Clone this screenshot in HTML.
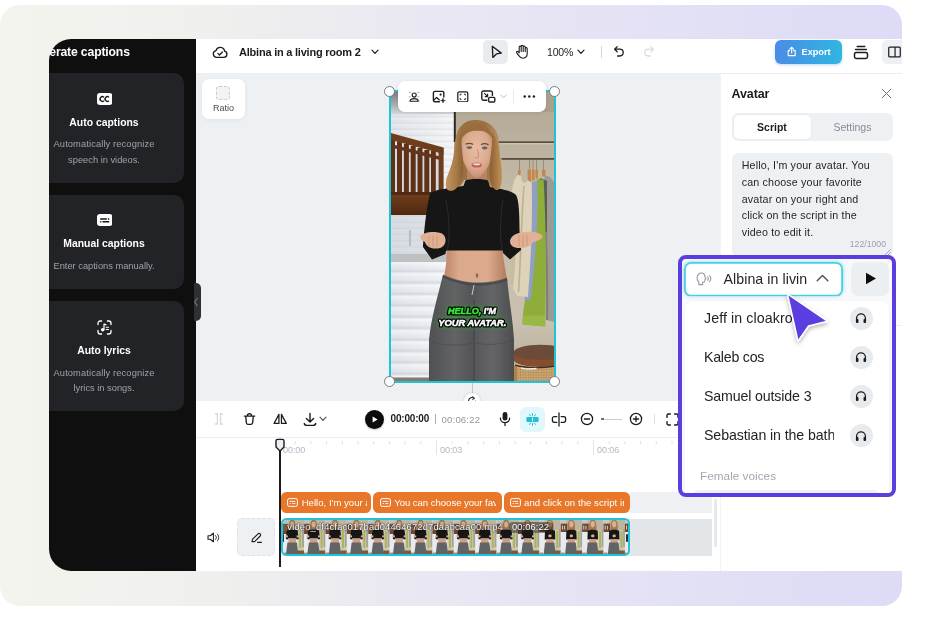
<!DOCTYPE html>
<html>
<head>
<meta charset="utf-8">
<style>
*{box-sizing:border-box;margin:0;padding:0}
html,body{width:952px;height:625px;overflow:hidden;background:#fff;font-family:"Liberation Sans",sans-serif;}
.abs{position:absolute}
#card{position:absolute;left:0;top:5px;width:902px;height:600.5px;border-radius:20px;background:linear-gradient(90deg,#f4f4ee 0%,#efefed 24%,#eae9f2 44%,#e4e2f4 70%,#dddbf6 100%);overflow:hidden}
#app{position:absolute;left:49px;top:34px;width:853px;height:532px;border-radius:22px 0 0 22px;overflow:hidden;background:#fff}
/* everything inside #app is positioned in page coords via wrapper offset */
#pg{will-change:transform;position:absolute;left:-49px;top:-39px;width:952px;height:625px}
#side{left:49px;top:39px;width:147px;height:532px;background:#0f0f10}
.scard{left:49px;width:135px;background:#222326;border-radius:0 10px 10px 0}
.st{color:#fff;font-weight:bold;font-size:10.4px;text-align:center;width:160px;left:24px;white-space:nowrap}
.sd{color:#9fa2a8;font-size:9.3px;text-align:center;width:160px;left:24px;white-space:nowrap}
#top{left:196px;top:39px;width:706px;height:34px;background:#fff}
#canvas{left:196px;top:73px;width:524px;height:328px;background:#eef1f4}
#tbar{left:196px;top:401px;width:524px;height:37px;background:#fff;border-bottom:1px solid #eceef0}
#tl{left:196px;top:438px;width:524px;height:133px;background:#fff}
#rp{left:720px;top:73px;width:182px;height:498px;background:#fff;border-left:1px solid #f1f3f5}
.it{left:704px;font-size:14.2px;color:#232427;white-space:nowrap;letter-spacing:0.05px}
.hp{left:849.8px;width:23px;height:23px;border-radius:12px;background:#e8ebee}
.hd{width:11px;height:11px;border-radius:6px;background:#fff;border:1px solid #767a82}
.tm{top:445.3px;font-size:9.1px;color:#b2b8c3;white-space:nowrap;letter-spacing:-0.1px}
.cc{top:491.7px;height:21.2px;border-radius:5.5px;background:#e8772a;color:#fff;font-size:9.6px;line-height:21px;white-space:nowrap}
.cc span{position:absolute;left:21px;top:0;overflow:hidden;display:block;height:21px}
.ci{top:497.8px}
</style>
</head>
<body>
<div id="card">
<div id="app"><div id="pg">

<div id="side" class="abs"></div>
<div id="top" class="abs"></div>
<div id="canvas" class="abs"></div>
<div id="tbar" class="abs"></div>
<div id="tl" class="abs"></div>
<div id="rp" class="abs"></div>


<div class="abs" style="left:26px;top:44.6px;width:200px;color:#fff;font-weight:bold;font-size:12.2px;white-space:nowrap;letter-spacing:-0.15px">Generate captions</div>
<div class="abs" style="left:40px;top:39px;width:9px;height:30px;background:#0f0f10"></div>
<div class="abs scard" style="top:73px;height:110px"></div>
<div class="abs scard" style="top:195px;height:94px"></div>
<div class="abs scard" style="top:301px;height:110px"></div>
<!-- cc icon -->
<svg class="abs" style="left:96.500px;top:92.900px" width="15.400" height="12" viewBox="0 0 15.400 12"><rect x="0" y="0" width="15.400" height="12" rx="3" fill="#fff"/><path d="M6.900 4.300A2.300 2.300 0 1 0 6.900 7.700M11.900 4.300A2.300 2.300 0 1 0 11.900 7.700" fill="none" stroke="#18191b" stroke-width="1.400"/></svg>
<div class="abs st" style="top:116.5px">Auto captions</div>
<div class="abs sd" style="top:139.3px;letter-spacing:0.12px">Automatically recognize</div>
<div class="abs sd" style="top:154.5px">speech in videos.</div>
<!-- manual icon -->
<svg class="abs" style="left:96.500px;top:214.400px" width="15.400" height="12" viewBox="0 0 15.400 12"><rect x="0" y="0" width="15.400" height="12" rx="3" fill="#fff"/><path d="M3.200 4.900H9.800M10.900 4.900H12.200M3.200 7.800H4.400M5.500 7.800H12.200" fill="none" stroke="#18191b" stroke-width="1.500"/></svg>
<div class="abs st" style="top:238px">Manual captions</div>
<div class="abs sd" style="top:260.5px">Enter captions manually.</div>
<!-- lyrics icon -->
<svg class="abs" style="left:96.800px;top:319.700px" width="15" height="15" viewBox="0 0 15 15"><path d="M1 4.600V3.200A2.200 2.200 0 0 1 3.200 1H4.600M10.400 1H11.800A2.200 2.200 0 0 1 14 3.200V4.600M14 10.400V11.800A2.200 2.200 0 0 1 11.800 14H10.400M4.600 14H3.200A2.200 2.200 0 0 1 1 11.800V10.400" fill="none" stroke="#fff" stroke-width="1.300" stroke-linecap="round"/><circle cx="5.700" cy="9.700" r="1.800" fill="#fff"/><path d="M7 9.700V4.200L9.400 4.900" fill="none" stroke="#fff" stroke-width="1.200" stroke-linejoin="round"/><path d="M9.200 7.300H11.500M9.200 9.500H11.500" stroke="#fff" stroke-width="1.100" stroke-linecap="round"/></svg>
<div class="abs st" style="top:344.5px">Auto lyrics</div>
<div class="abs sd" style="top:367.6px;letter-spacing:0.12px">Automatically recognize</div>
<div class="abs sd" style="top:382.5px">lyrics in songs.</div>
<!-- collapse tab -->
<div class="abs" style="left:194px;top:283px;width:6.9px;height:38px;background:#2f3033;border-radius:0 5px 5px 0"></div>
<svg class="abs" style="left:193.300px;top:297.200px" width="6" height="10" viewBox="0 0 6 10"><path d="M4.400 1.200L1.600 5L4.400 8.800" fill="none" stroke="#74777c" stroke-width="1.100"/></svg>


<!-- cloud icon -->
<svg class="abs" style="left:212px;top:44.5px" width="16" height="14" viewBox="0 0 16 14"><path d="M4.3 12.3H11.9A3.1 3.1 0 0 0 12.6 6.2A4.4 4.4 0 0 0 4 5.6A3.4 3.4 0 0 0 4.3 12.3Z" fill="none" stroke="#1b1c1f" stroke-width="1.3" stroke-linejoin="round"/><path d="M5.9 8.4L7.5 10L10.4 7" fill="none" stroke="#1b1c1f" stroke-width="1.3" stroke-linecap="round" stroke-linejoin="round"/></svg>
<div class="abs" style="left:239px;top:45.5px;font-size:11px;font-weight:bold;color:#1b1c1f;white-space:nowrap;letter-spacing:-0.22px">Albina in a living room 2</div>
<svg class="abs" style="left:371px;top:49px" width="8" height="6" viewBox="0 0 8 6"><path d="M1 1.2L4 4.3L7 1.2" fill="none" stroke="#1b1c1f" stroke-width="1.2" stroke-linecap="round" stroke-linejoin="round"/></svg>
<!-- select tool -->
<div class="abs" style="left:483px;top:40px;width:25px;height:24px;border-radius:5px;background:#e9ecef"></div>
<svg class="abs" style="left:490px;top:45px" width="13" height="14" viewBox="0 0 13 14"><path d="M2.3 1.3L11.3 8.1L6.4 8.9L2.9 12.4Z" fill="none" stroke="#1b1c1f" stroke-width="1.35" stroke-linejoin="round"/></svg>
<!-- hand -->
<svg class="abs" style="left:515px;top:44px" width="14" height="16" viewBox="0 0 14 16"><path d="M4.2 8.2V3.1A1 1 0 0 1 6.2 3.1V2.2A1 1 0 0 1 8.2 2.2V3A1 1 0 0 1 10.2 3V4.6A1 1 0 0 1 12.2 4.6V9.6C12.2 12.6 10.4 14.2 8 14.2C5.6 14.2 4.8 13.2 3.6 11.4L1.6 8.6C1.1 7.6 2.4 6.8 3.2 7.6L4.2 8.8M6.2 3.1V7.4M8.2 3V7.4M10.2 4.6V7.6" fill="none" stroke="#1b1c1f" stroke-width="1.1" stroke-linecap="round" stroke-linejoin="round"/></svg>
<div class="abs" style="left:547px;top:46px;font-size:10.5px;color:#1b1c1f;white-space:nowrap;letter-spacing:-0.2px">100%</div>
<svg class="abs" style="left:577px;top:49px" width="8" height="6" viewBox="0 0 8 6"><path d="M1 1.2L4 4.3L7 1.2" fill="none" stroke="#1b1c1f" stroke-width="1.2" stroke-linecap="round" stroke-linejoin="round"/></svg>
<div class="abs" style="left:601px;top:46px;width:1px;height:12px;background:#d4d7db"></div>
<!-- undo -->
<svg class="abs" style="left:613px;top:45px" width="12" height="13" viewBox="0 0 12 13"><path d="M4.2 1.6L1.6 4.2L4.2 6.8M1.8 4.2H6.8A3.4 3.4 0 0 1 6.8 11H4.6" fill="none" stroke="#1b1c1f" stroke-width="1.3" stroke-linecap="round" stroke-linejoin="round"/></svg>
<svg class="abs" style="left:643px;top:45px" width="12" height="13" viewBox="0 0 12 13"><path d="M7.8 1.6L10.4 4.2L7.8 6.8M10.2 4.2H5.2A3.4 3.4 0 0 0 5.2 11H7.4" fill="none" stroke="#d9dce0" stroke-width="1.3" stroke-linecap="round" stroke-linejoin="round"/></svg>
<!-- export -->
<div class="abs" style="left:775px;top:40px;width:67px;height:24px;border-radius:6px;background:linear-gradient(90deg,#4a8ce6,#2fb6e2);box-shadow:0 1px 3px rgba(60,140,230,.35)"></div>
<svg class="abs" style="left:787.3px;top:46px" width="10" height="11" viewBox="0 0 10 11"><path d="M2.700 4.600H1.200V9.600H8.200V4.600H6.700M4.700 7V1.300M2.800 3.100L4.700 1.200L6.600 3.100" fill="none" stroke="#fff" stroke-width="1.100" stroke-linejoin="round" stroke-linecap="round"/></svg>
<div class="abs" style="left:801.5px;top:46.5px;font-size:9.2px;font-weight:bold;color:#fff;white-space:nowrap">Export</div>
<!-- stack -->
<svg class="abs" style="left:853px;top:45px" width="16" height="15" viewBox="0 0 16 15"><path d="M4.2 1.4H11.8M2.6 4.6H13.4" fill="none" stroke="#1b1c1f" stroke-width="1.5" stroke-linecap="round"/><rect x="1.5" y="7.6" width="13" height="5.8" rx="1.6" fill="none" stroke="#1b1c1f" stroke-width="1.5"/></svg>
<div class="abs" style="left:882px;top:40px;width:26px;height:24px;border-radius:5px;background:#eef0f3"></div>
<svg class="abs" style="left:888.2px;top:46px" width="13" height="12" viewBox="0 0 14 12"><rect x="0.8" y="0.8" width="12.4" height="10.4" rx="1" fill="none" stroke="#1b1c1f" stroke-width="1.3"/><path d="M7.6 0.8V11.2" stroke="#1b1c1f" stroke-width="1.3"/></svg>


<!-- ratio button -->
<div class="abs" style="left:202px;top:79px;width:43px;height:40px;border-radius:7px;background:#fff;box-shadow:0 1px 5px rgba(0,0,0,.06)"></div>
<div class="abs" style="left:216px;top:86px;width:14px;height:14px;border-radius:3px;border:1.2px dashed #c9cdd2;background:#f1f3f5"></div>
<div class="abs" style="left:202px;top:103px;width:43px;text-align:center;font-size:9px;color:#4a4d54">Ratio</div>
<!-- photo -->
<svg class="abs" style="left:389px;top:90px" width="166" height="292" viewBox="389 90 166 292" preserveAspectRatio="none">
<!--PHOTO_S--><defs>
<linearGradient id="gBl" x1="0" x2="1" y1="0" y2="0"><stop offset="0" stop-color="#dde1e7"/><stop offset="0.6" stop-color="#e9ebef"/><stop offset="1" stop-color="#f3f4f6"/></linearGradient>
<linearGradient id="gTop" x1="0" x2="0" y1="0" y2="1"><stop offset="0" stop-color="#77787a"/><stop offset="0.6" stop-color="#a9abae"/><stop offset="1" stop-color="#d5d7db"/></linearGradient>
<linearGradient id="gWall" x1="0" x2="0" y1="0" y2="1"><stop offset="0" stop-color="#b1a793"/><stop offset="0.35" stop-color="#c3baa8"/><stop offset="0.8" stop-color="#c9c0af"/><stop offset="1" stop-color="#b3a996"/></linearGradient>
<linearGradient id="gSl" x1="0" x2="0" y1="0" y2="1"><stop offset="0" stop-color="#fff" stop-opacity=".55"/><stop offset="0.4" stop-color="#fff" stop-opacity=".1"/><stop offset="0.82" stop-color="#b9bec8" stop-opacity=".42"/><stop offset="1" stop-color="#fff" stop-opacity=".4"/></linearGradient><pattern id="pBl" x="0" y="262" width="10" height="11.4" patternUnits="userSpaceOnUse"><rect width="10" height="11.4" fill="url(#gSl)"/></pattern><pattern id="pBl2" x="0" y="112" width="10" height="6.2" patternUnits="userSpaceOnUse"><rect width="10" height="6.2" fill="url(#gSl)" opacity=".6"/></pattern>
<linearGradient id="gPant" x1="0" x2="1" y1="0" y2="0"><stop offset="0" stop-color="#4f5052"/><stop offset="0.3" stop-color="#626365"/><stop offset="0.5" stop-color="#545557"/><stop offset="0.75" stop-color="#646567"/><stop offset="1" stop-color="#4c4d4f"/></linearGradient>
<linearGradient id="gSkin" x1="0" x2="1" y1="0" y2="0"><stop offset="0" stop-color="#b98363"/><stop offset="0.25" stop-color="#dba98b"/><stop offset="0.7" stop-color="#dcab8e"/><stop offset="1" stop-color="#b27a5b"/></linearGradient>
<linearGradient id="gHair" x1="0" x2="1" y1="0" y2="0"><stop offset="0" stop-color="#bf935d"/><stop offset="0.3" stop-color="#99703f"/><stop offset="0.7" stop-color="#9d7242"/><stop offset="1" stop-color="#c0945f"/></linearGradient>
<linearGradient id="gBed" x1="0" x2="0" y1="0" y2="1"><stop offset="0" stop-color="#73401f"/><stop offset="1" stop-color="#50280f"/></linearGradient>
<linearGradient id="gHL" x1="0" x2="1" y1="0" y2="0"><stop offset="0" stop-color="#c29660"/><stop offset="0.6" stop-color="#a87a48"/><stop offset="1" stop-color="#8a5e34"/></linearGradient><linearGradient id="gHR" x1="0" x2="1" y1="0" y2="0"><stop offset="0" stop-color="#8a5e34"/><stop offset="0.5" stop-color="#a67743"/><stop offset="1" stop-color="#bf925c"/></linearGradient>
<radialGradient id="gFace" cx="0.48" cy="0.45" r="0.62"><stop offset="0" stop-color="#e8bca1"/><stop offset="0.6" stop-color="#dcab8f"/><stop offset="1" stop-color="#bd8768"/></radialGradient>
<pattern id="pMesh" x="514" y="368.500" width="2.600" height="2.600" patternUnits="userSpaceOnUse"><rect x="0.700" y="0.700" width="1.300" height="1.300" fill="#9c7440" opacity=".75"/></pattern>
<filter id="b1"><feGaussianBlur stdDeviation="0.5"/></filter>
<filter id="b2"><feGaussianBlur stdDeviation="1.2"/></filter>
<filter id="gl" x="-20%" y="-50%" width="140%" height="200%"><feGaussianBlur stdDeviation="2"/></filter>
</defs><g filter="url(#b1)">
<!-- wall -->
<rect x="389" y="90" width="166" height="292" fill="url(#gWall)"/>
<!-- blinds -->
<rect x="389" y="90" width="65" height="292" fill="url(#gBl)"/>
<rect x="389" y="112" width="65" height="145" fill="url(#pBl2)"/><rect x="389" y="262" width="65" height="120" fill="url(#pBl)"/>
<rect x="389" y="90" width="65" height="24" fill="url(#gTop)"/>
<rect x="389" y="215" width="58" height="40" fill="#c9ced6" opacity=".45"/>
<rect x="389" y="254" width="58" height="8" fill="#bfc0c2" filter="url(#b1)"/>
<rect x="409" y="230" width="2" height="16" fill="#a9adb3" opacity=".7"/>
<!-- door frame -->
<rect x="453.8" y="108" width="2" height="34" fill="#2c2a28"/>
<rect x="455.8" y="90" width="100" height="22" fill="#aaa08c"/>
<!-- floor -->
<rect x="389" y="377.500" width="42" height="5" fill="#857a6d"/>
<!-- bed -->
<g>
<rect x="390" y="150" width="50" height="45" fill="#d5d8dc"/>
<g fill="#5e3216"><rect x="389" y="140" width="6" height="55"/><rect x="397" y="142" width="5" height="53"/><rect x="403.900" y="144" width="5" height="51"/><rect x="410.700" y="146" width="5" height="49"/><rect x="417.500" y="148" width="5" height="47"/><rect x="424.300" y="150" width="5" height="45"/><rect x="431" y="151" width="4.800" height="44"/></g>
<path d="M389 132.5L443.5 147.5V154L389 139.5Z" fill="#6e3d1e"/>
<path d="M389 143.5L440 156.5V160L389 147Z" fill="#64361a"/>
<rect x="438.6" y="148" width="5" height="60" fill="#6c3c1e"/>
<rect x="389" y="192" width="55" height="23" fill="url(#gBed)"/>
<rect x="389" y="192" width="55" height="3" fill="#512a12"/>
</g>
<!-- shelf rails -->
<rect x="497.5" y="141.3" width="58" height="1.7" fill="#5d4d41"/>
<rect x="497.5" y="143" width="58" height="1.4" fill="#d3cbbb" opacity=".7"/>
<rect x="501.5" y="158" width="54" height="1.8" fill="#5a4a3e"/>
<!-- hanger hooks -->
<g stroke="#8b7b69" stroke-width=".7" fill="none"><path d="M519.5 160V170"/><path d="M529.5 160V170"/><path d="M533 160V170"/><path d="M536.5 160V170"/><path d="M543.5 160V170"/></g>
<g fill="#c78649"><rect x="518" y="169.5" width="2.6" height="5.5" rx="1"/><rect x="527.6" y="169.5" width="3.6" height="12" rx="1"/><rect x="532" y="169.5" width="2.6" height="11" rx="1"/><rect x="535.4" y="169.5" width="2.6" height="9" rx="1"/><rect x="542" y="169.5" width="3.4" height="7" rx="1"/></g>
<!-- clothes -->
<path d="M545 176C548 175 552 178 555 184V322L546 320C546 280 544 230 541 190Z" fill="#9a9b95"/>
<path d="M541 182C545 200 548 260 547 320" stroke="#6c6d68" stroke-width="2" fill="none" opacity=".6"/>
<path d="M540 178L547 181V232L541.500 232Z" fill="#5a5f52"/><path d="M537 179L543.600 180C546 220 546.500 280 545.200 326.500L522.500 324.500C522.500 314 524 306 525.500 298C528.500 280 531 255 533 230Z" fill="#8fad3a"/>
<path d="M523.200 315.500H545.500L545.200 326.500L522.500 324.500Z" fill="#9ab844"/>
<path d="M532 182L537 181C538.500 210 536 258 530.500 300L524.500 300C529 262 532 220 532 182Z" fill="#8f9fc6"/>
<path d="M518 175C514 178 511.5 186 512 200C514 230 512 262 509 282L517.5 296L528 297C531 260 533 215 531.5 183L527.5 180C525 186 521 182 521 176Z" fill="#ddd2ba"/>
<path d="M524 186C521.5 215 521 255 518.5 292" stroke="#b7a98c" stroke-width="1.6" fill="none" opacity=".8"/>
<path d="M512 200C514 230 512 262 509 282L513 288C516 262 517 225 516 196Z" fill="#c9bc9f"/>
<!-- table / basket -->
<rect x="514" y="366" width="42" height="16" fill="#c9a572"/>
<rect x="514" y="368.500" width="42" height="14" fill="url(#pMesh)"/>
<rect x="513.500" y="352.300" width="43" height="7" fill="#864e2d"/><ellipse cx="540.500" cy="359.300" rx="27" ry="7.600" fill="#864e2d"/>
<ellipse cx="540.500" cy="352.300" rx="27" ry="7.600" fill="#6c4c3a"/>
<path d="M515 364.500C526 367.600 542 367.600 555 365.300V366.700C542 369 526 369 515 365.900Z" fill="#3d3128"/>
<path d="M521 367.400C526 368.500 532 368.500 536.500 367.800V369.200C532 369.900 526 369.900 521 368.800Z" fill="#f1efe9"/>
<rect x="514" y="366" width="3" height="16" fill="#a8763f" opacity=".7"/>
<!-- hair back -->
<path d="M476 120C468 119.5 460 124 457 133C454 142 455 152 452 163C450 171 446 178 446 185C446 190 450 191.5 455 190C459 188.5 462 184 464 180L488 180C489 184 491 188 495 189.5C499 190.5 501 186 501.5 180C502 172 501 164 500 156C499 146 499.5 138 496 131C492 124 485 120 476 120Z" fill="url(#gHair)"/>
<!-- neck -->
<path d="M467 168H487V184H467Z" fill="#b98465"/>
<!-- face -->
<path d="M476.500 126C468 126 461.500 133 461 144C460.500 153 463 162 467 168.500C470 173.500 473.500 177.600 476.800 177.600C480 177.600 484 173.500 487 168.500C491 162 493.300 153 493 144C492.500 133 485.500 126 476.500 126Z" fill="url(#gFace)"/>
<path d="M461 140C462 130 468 124 476 123.5C485 123 491 129 492.5 139C489 133 484 130 477 131C470 130 464 134 461 140Z" fill="#9a6c3e"/>
<ellipse cx="469.300" cy="147.600" rx="2.800" ry="1.400" fill="#55666f"/>
<ellipse cx="484.700" cy="148" rx="2.800" ry="1.400" fill="#55666f"/>
<path d="M465.5 144.2C468 143 471 143.2 473 144.4M481 144.6C483.5 143.4 486.5 143.6 488.5 145" stroke="#6e4a2c" stroke-width="1.300" fill="none"/>
<path d="M477.500 149C478 153 478.800 155.500 478.400 157.200C477.600 158.200 475.600 158.200 474.800 157.400" stroke="#b98365" stroke-width="1" fill="none" opacity=".8"/>
<ellipse cx="476.8" cy="165" rx="5.2" ry="2.6" fill="#c8615f"/>
<ellipse cx="476.8" cy="164.2" rx="3.6" ry="1" fill="#f0dcd6"/>
<!-- top -->
<path d="M465.5 180.5C470 178.5 483 178.5 488 180.5L490 187C500 189 511 190 516 195C519 200 519.5 215 519.5 230L521 250L510 259.5L503 253L502.5 251L446 251L445.5 254L432 259.5L423 247C424 230 427 205 430 194C434 189 452 188 463.5 186Z" fill="#121213"/>
<path d="M446 200C450 220 450 240 447 251M503 200C500 220 500 240 502.5 251" stroke="#26262a" stroke-width="1.5" fill="none"/>
<!-- hair front strands -->
<path d="M461.5 132C456 140 455.5 152 452.5 163C450 171 445.5 178 445.8 185C446 190.5 450 192 454 190C458.5 187.5 462 181 463 172C464 160 460.5 146 461.5 132Z" fill="url(#gHL)"/>
<path d="M492 132C497 139 499 148 500 157C501 165 502.3 173 501.6 181C501 188 498.5 191.5 495 189.5C491.5 187 489.5 180 489.5 171C489.500 159 493 146 492 132Z" fill="url(#gHR)"/>
<!-- midriff -->
<path d="M446.5 250.5H502.5C503 258 505 266 506.5 277L507 282H443L444.5 274C446 266 447 258 446.5 250.5Z" fill="url(#gSkin)"/>
<ellipse cx="477" cy="275.5" rx="1.3" ry="2.2" fill="#9b6444"/>
<!-- pants -->
<path d="M443 274.5C455 280 466 282.5 477 282.5C488 282.5 499 281 507 277.5C509 300 513 320 514 340V382H429V340C431 318 438 296 443 274.5Z" fill="url(#gPant)"/>
<path d="M443 276.5C455 282 466 284.5 477 284.5C488 284.5 499 283 507 279.5" stroke="#454648" stroke-width="2.4" fill="none" opacity=".8"/>
<path d="M474 300V382" stroke="#464749" stroke-width="1.6" opacity=".8"/>
<path d="M432 342C445 346 460 346 474 343M476 343C490 346 502 344 513 340" stroke="#4a4b4d" stroke-width="1" fill="none" opacity=".7"/>
<path d="M474 285L472 295" stroke="#d6d6d6" stroke-width=".9"/>
<!-- hands -->
<path d="M420.5 236C424 232 432 231.5 438 232.5C443 233 446 236 445.5 241C445 246 441 249 435 248.5C430 248.5 426 246 425 242C422 241 419.5 238.5 420.5 236Z" fill="#e2b195"/>
<path d="M429 236V246M433 235.5V247M437 236V246.5" stroke="#c18c6d" stroke-width=".8" opacity=".8"/>
<path d="M542.5 235.5C539 232 531 231 524 232C517 232.5 510.5 236 510 241C510 246 514 248.5 521 248C527 247.5 531 246 533 242C537 241.5 543.5 238.5 542.5 235.5Z" fill="#e2b195"/>
<path d="M519 235.5V246.5M523 235V247M527 235V246" stroke="#c18c6d" stroke-width=".8" opacity=".8"/>
<!-- caption -->
<g font-family="Liberation Sans, sans-serif" font-weight="bold" font-style="italic" font-size="9.300" text-anchor="middle">
<g fill="#19d219" stroke="#16c516" stroke-width="4" opacity=".4" filter="url(#gl)"><text x="472" y="313.800" textLength="48" lengthAdjust="spacingAndGlyphs">HELLO, I'M</text><text x="472.300" y="325.500" textLength="68" lengthAdjust="spacingAndGlyphs">YOUR AVATAR.</text></g>
<text x="472" y="313.800" fill="#000" stroke="#000" stroke-width="3" stroke-linejoin="round" textLength="48" lengthAdjust="spacingAndGlyphs">HELLO, I'M</text>
<text x="472.300" y="325.500" fill="#000" stroke="#000" stroke-width="3" stroke-linejoin="round" textLength="68" lengthAdjust="spacingAndGlyphs">YOUR AVATAR.</text>
<text x="472" y="313.800" fill="#fff" stroke="#fff" stroke-width=".5" textLength="48" lengthAdjust="spacingAndGlyphs"><tspan fill="#35ea35" stroke="#35ea35">HELLO,</tspan> I'M</text>
<text x="472.300" y="325.500" fill="#fff" stroke="#fff" stroke-width=".5" textLength="68" lengthAdjust="spacingAndGlyphs">YOUR AVATAR.</text>
</g>
</g><!--PHOTO_E-->
</svg>
<div class="abs" style="left:388.5px;top:89.5px;width:167px;height:293px;border:2px solid #1fc3d4"></div>
<!-- floating toolbar -->
<div class="abs" style="left:398px;top:81px;width:147.5px;height:31px;border-radius:7px;background:#fff;box-shadow:0 1px 4px rgba(0,0,0,.08)"></div>

<svg class="abs" style="left:408.2px;top:90.6px" width="12.4" height="11.5" viewBox="0 0 14 13"><circle cx="7" cy="4.6" r="2.3" fill="none" stroke="#1e1f22" stroke-width="1.3"/><path d="M2.2 11.6C2.6 9.4 4.4 8.6 7 8.6C9.6 8.6 11.4 9.4 11.8 11.6Z" fill="none" stroke="#1e1f22" stroke-width="1.3" stroke-linejoin="round"/><path d="M1.4 1.8H3.4M10.6 1.8H12.6M1.4 6.6H3M11 6.6H12.6M1.2 11.6H2M12 11.6H12.8" stroke="#9ea2a9" stroke-width="1.2" stroke-linecap="round" opacity=".75"/></svg>
<svg class="abs" style="left:432px;top:90px" width="15" height="15" viewBox="0 0 15 15"><path d="M11.8 7V3A1.6 1.6 0 0 0 10.2 1.4H3A1.6 1.6 0 0 0 1.4 3V10.2A1.6 1.6 0 0 0 3 11.8H7.4" fill="none" stroke="#1e1f22" stroke-width="1.4" stroke-linecap="round"/><path d="M1.6 10.4L4.6 7.4L7.6 10.2" fill="none" stroke="#1e1f22" stroke-width="1.3" stroke-linejoin="round"/><circle cx="8.6" cy="4.6" r="1.1" fill="#1e1f22"/><path d="M11 8.2C11.2 10 11.6 10.4 13.4 10.6C11.6 10.8 11.2 11.2 11 13C10.8 11.2 10.4 10.8 8.6 10.6C10.4 10.4 10.8 10 11 8.2Z" fill="#1e1f22" stroke="#1e1f22" stroke-width=".6" stroke-linejoin="round"/></svg>
<svg class="abs" style="left:457px;top:90.8px" width="11.6" height="11.6" viewBox="0 0 13 13"><rect x="0.9" y="0.9" width="11.2" height="11.2" rx="1.8" fill="none" stroke="#1e1f22" stroke-width="1.4"/><path d="M3.6 5V3.6H5M8 3.6H9.4V5M9.4 8V9.4H8M5 9.4H3.6V8" fill="none" stroke="#1e1f22" stroke-width="1.1"/></svg>
<svg class="abs" style="left:480.5px;top:90px" width="15" height="13" viewBox="0 0 15 13"><path d="M11.4 5.4V2.6A1.6 1.6 0 0 0 9.8 1H2.4A1.6 1.6 0 0 0 0.8 2.600V8.6A1.6 1.6 0 0 0 2.400 10.2H5.8" fill="none" stroke="#1e1f22" stroke-width="1.4" stroke-linecap="round"/><rect x="7.6" y="7.4" width="6.2" height="4.6" rx="1.2" fill="none" stroke="#1e1f22" stroke-width="1.4"/><path d="M3.2 3.2L6.4 6.4M6.6 3.8V6.6H3.8" fill="none" stroke="#1e1f22" stroke-width="1.2" stroke-linejoin="round"/></svg>
<svg class="abs" style="left:500px;top:94px" width="7" height="5" viewBox="0 0 7 5"><path d="M0.8 0.9L3.5 3.8L6.2 0.9" fill="none" stroke="#aeb6c4" stroke-width="0.9" stroke-linecap="round" stroke-linejoin="round"/></svg>
<div class="abs" style="left:513px;top:89px;width:1px;height:15px;background:#e8eaed"></div>
<svg class="abs" style="left:523px;top:95px" width="13" height="3" viewBox="0 0 13 3"><circle cx="1.7" cy="1.5" r="1.25" fill="#1e1f22"/><circle cx="6.3" cy="1.5" r="1.25" fill="#1e1f22"/><circle cx="10.9" cy="1.5" r="1.25" fill="#1e1f22"/></svg>

<!-- handles -->
<div class="abs hd" style="left:384px;top:85.5px"></div>
<div class="abs hd" style="left:549px;top:85.5px"></div>
<div class="abs hd" style="left:384px;top:376px"></div>
<div class="abs hd" style="left:549px;top:376px"></div>
<div class="abs" style="left:471.5px;top:383px;width:1px;height:10px;background:#c4c8cd"></div>
<div class="abs" style="left:463.700px;top:392.800px;width:16.600px;height:16.600px;border-radius:9px;background:#fff;box-shadow:0 0 3px rgba(0,0,0,.18)"></div>
<svg class="abs" style="left:467px;top:396px" width="10" height="10" viewBox="0 0 11 11"><path d="M9.3 5.5A3.8 3.8 0 1 1 7.6 2.3" fill="none" stroke="#1b1c1f" stroke-width="1.2" stroke-linecap="round"/><path d="M6.4 0.8L8.3 2.5L6.2 3.9" fill="none" stroke="#1b1c1f" stroke-width="1.1" stroke-linecap="round" stroke-linejoin="round"/></svg>


<div class="abs" style="left:196px;top:401px;width:524px;height:36px;background:#fff"></div>
<!-- timeline toolbar icons -->
<svg class="abs" style="left:214px;top:413px" width="10" height="12" viewBox="0 0 10 12"><path d="M1 1H3.4V11H1M9 1H6.6V11H9" fill="none" stroke="#d3d9e3" stroke-width="1.300"/></svg>
<svg class="abs" style="left:242.8px;top:412.4px" width="13" height="13.4" viewBox="0 0 14 15"><path d="M1.200 4.600H12.800M4.600 4.400C4.600 1.200 9.400 1.200 9.400 4.400M2.800 4.800L3.400 11.800C3.500 13.200 4.200 13.800 5.200 13.800H8.800C9.800 13.800 10.500 13.200 10.600 11.800L11.200 4.800" fill="none" stroke="#1b1c1f" stroke-width="1.500" stroke-linecap="round" stroke-linejoin="round"/></svg>
<svg class="abs" style="left:272.6px;top:413px" width="14.4" height="12" viewBox="0 0 16 13"><path d="M6.600 1.400V11.400H1.200Z" fill="none" stroke="#1b1c1f" stroke-width="1.400" stroke-linejoin="round"/><path d="M9.400 1.400V11.400H14.800Z" fill="none" stroke="#1b1c1f" stroke-width="1.400" stroke-linejoin="round"/></svg>
<svg class="abs" style="left:302.5px;top:411.600px" width="14" height="15" viewBox="0 0 14 15"><path d="M7 1.400V9.800M3.400 6.400L7 10L10.600 6.400" fill="none" stroke="#1b1c1f" stroke-width="1.400" stroke-linecap="round" stroke-linejoin="round"/><path d="M1.300 11.400C1.500 13 2.400 13.400 3.800 13.400H10.200C11.600 13.400 12.500 13 12.700 11.400" fill="none" stroke="#1b1c1f" stroke-width="1.400" stroke-linecap="round"/></svg>
<svg class="abs" style="left:319.2px;top:416px" width="8" height="6" viewBox="0 0 8 6"><path d="M1 1.2L4 4.3L7 1.2" fill="none" stroke="#4d5057" stroke-width="1.1" stroke-linecap="round" stroke-linejoin="round"/></svg>
<div class="abs" style="left:364.5px;top:409.5px;width:19px;height:19px;border-radius:10px;background:#0c0c0e;box-shadow:0 1px 2px rgba(0,0,0,.25)"></div>
<svg class="abs" style="left:371.5px;top:415.5px" width="6" height="7" viewBox="0 0 6 7"><path d="M0.6 0.5L5.6 3.5L0.6 6.5Z" fill="#fff"/></svg>
<div class="abs" style="left:390.6px;top:413.2px;font-size:10px;font-weight:bold;color:#1b1c1f;white-space:nowrap;letter-spacing:-0.2px">00:00:00</div>
<div class="abs" style="left:434.5px;top:414px;width:1px;height:10px;background:#a9adb4"></div>
<div class="abs" style="left:441.6px;top:414px;font-size:9.6px;color:#9297a0;white-space:nowrap;letter-spacing:0.15px">00:06:22</div>
<!-- mic -->
<svg class="abs" style="left:499px;top:411px" width="12" height="16" viewBox="0 0 12 16"><rect x="3.6" y="1" width="4.8" height="8.6" rx="2.4" fill="#1b1c1f"/><path d="M1.4 7.2C1.4 13.2 10.6 13.2 10.6 7.2M6 12V14.6" fill="none" stroke="#1b1c1f" stroke-width="1.3" stroke-linecap="round"/></svg>
<div class="abs" style="left:520px;top:407px;width:24.5px;height:24.5px;border-radius:6px;background:#e0f7fb"></div>
<svg class="abs" style="left:525px;top:412px" width="15" height="15" viewBox="0 0 15 15"><rect x="1.4" y="5" width="12.2" height="5" rx="1.2" fill="#1fbfd6"/><path d="M7.5 5.8V9.2" stroke="#fff" stroke-width="1.1"/><path d="M4.6 2.6L5.4 3.8M7.5 1.6V3.4M10.4 2.6L9.6 3.8M4.6 12.4L5.4 11.2M7.5 13.4V11.6M10.4 12.4L9.6 11.2" stroke="#1fbfd6" stroke-width="1" stroke-linecap="round"/></svg>
<svg class="abs" style="left:551px;top:411.5px" width="16" height="15" viewBox="0 0 16 15"><path d="M8 1V14" stroke="#1b1c1f" stroke-width="1.3" stroke-linecap="round"/><path d="M5.8 4.6H3.4C2.2 4.6 1.4 5.4 1.4 6.4V8.6C1.4 9.6 2.2 10.4 3.4 10.4H5.8M10.2 4.6H12.6C13.8 4.6 14.6 5.4 14.6 6.4V8.6C14.6 9.6 13.8 10.4 12.6 10.4H10.2" fill="none" stroke="#1b1c1f" stroke-width="1.3" stroke-linecap="round"/></svg>
<svg class="abs" style="left:580px;top:412px" width="14" height="14" viewBox="0 0 14 14"><circle cx="7" cy="7" r="5.6" fill="none" stroke="#1b1c1f" stroke-width="1.3"/><path d="M4.4 7H9.6" stroke="#1b1c1f" stroke-width="1.3" stroke-linecap="round"/></svg>
<div class="abs" style="left:601px;top:418.5px;width:21px;height:1.2px;background:#c9cdd3"></div>
<div class="abs" style="left:601px;top:418.2px;width:3px;height:1.8px;background:#6d7178"></div>
<svg class="abs" style="left:628.5px;top:412px" width="14" height="14" viewBox="0 0 14 14"><circle cx="7" cy="7" r="5.6" fill="none" stroke="#1b1c1f" stroke-width="1.3"/><path d="M4.4 7H9.6M7 4.4V9.6" stroke="#1b1c1f" stroke-width="1.3" stroke-linecap="round"/></svg>
<div class="abs" style="left:654px;top:414px;width:1px;height:10px;background:#dcdfe3"></div>
<svg class="abs" style="left:666px;top:412.5px" width="13" height="13" viewBox="0 0 13 13"><path d="M1 4.4V2.4A1.4 1.4 0 0 1 2.4 1H4.4M8.6 1H10.6A1.4 1.4 0 0 1 12 2.4V4.4M12 8.6V10.6A1.4 1.4 0 0 1 10.6 12H8.6M4.4 12H2.4A1.4 1.4 0 0 1 1 10.6V8.6" fill="none" stroke="#1b1c1f" stroke-width="1.4" stroke-linecap="round"/></svg>
<!-- ruler -->
<svg class="abs" style="left:196px;top:438px" width="524" height="20" viewBox="196 438 524 20"><g stroke="#dfe2e6" stroke-width="1">
<path d="M295.2 441V444.4"/><path d="M310.9 441V444.4"/><path d="M326.6 441V444.4"/><path d="M342.3 441V444.4"/><path d="M358.0 441V444.4"/><path d="M373.7 441V444.4"/><path d="M389.4 441V444.4"/><path d="M405.1 441V444.4"/><path d="M420.8 441V444.4"/><path d="M436.5 440V455" stroke="#e1e4e8"/><path d="M452.2 441V444.4"/><path d="M467.9 441V444.4"/><path d="M483.6 441V444.4"/><path d="M499.3 441V444.4"/><path d="M515.0 441V444.4"/><path d="M530.7 441V444.4"/><path d="M546.4 441V444.4"/><path d="M562.1 441V444.4"/><path d="M577.8 441V444.4"/><path d="M593.5 440V455" stroke="#e1e4e8"/><path d="M609.2 441V444.4"/><path d="M624.9 441V444.4"/><path d="M640.6 441V444.4"/><path d="M656.3 441V444.4"/><path d="M672.0 441V444.4"/><path d="M687.7 441V444.4"/><path d="M703.4 441V444.4"/><path d="M719.1 441V444.4"/></g></svg>
<div class="abs tm" style="left:283px">00:00</div>
<div class="abs tm" style="left:440px">00:03</div>
<div class="abs tm" style="left:597px">00:06</div>
<!-- track backgrounds -->
<div class="abs" style="left:630px;top:492px;width:81.5px;height:21px;background:#eef1f4"></div>
<div class="abs" style="left:628px;top:518.5px;width:83.5px;height:37px;background:#e2e6e9"></div>
<div class="abs" style="left:713.5px;top:499px;width:3.5px;height:47.5px;border-radius:2px;background:#e6e9ec"></div>
<!-- caption clips -->
<div class="abs cc" style="left:280.7px;width:90.3px"><span style="width:65.2px">Hello, I'm your avatar</span></div>
<div class="abs cc" style="left:373.2px;width:128.8px"><span style="width:102px;letter-spacing:-0.05px">You can choose your favo</span></div>
<div class="abs cc" style="left:503.7px;width:126.5px"><span style="width:100px;letter-spacing:0.04px;left:20.4px">and click on the script in</span></div>
<svg class="abs ci" style="left:287px" width="11" height="9" viewBox="0 0 11 9"><use href="#cci"/></svg>
<svg class="abs ci" style="left:379.5px" width="11" height="9" viewBox="0 0 11 9"><use href="#cci"/></svg>
<svg class="abs ci" style="left:509.8px" width="11" height="9" viewBox="0 0 11 9"><use href="#cci"/></svg>
<svg width="0" height="0" style="position:absolute"><defs><g id="cci"><rect x="0.6" y="0.6" width="9.8" height="7.8" rx="1.6" fill="none" stroke="#fff" stroke-width="1"/><path d="M2.6 3.4H8.4M2.6 5.6H4M5.2 5.6H8.4" stroke="#fff" stroke-width="0.9"/></g></defs></svg>
<!-- video clip -->
<div class="abs" style="left:280.5px;top:518.3px;width:349px;height:37.4px;border-radius:5.5px;border:2px solid #1ec4d6;overflow:hidden;background:#c9c6bd">
<svg style="position:absolute;left:-2px;top:-2px" width="349" height="37.2" viewBox="280.7 518.5 349 37.2">
<defs><g id="th">
<rect x="0" y="0" width="21.4" height="37.2" fill="#e8eaee"/>
<rect x="0" y="0" width="6" height="6" fill="#bfc0c2"/>
<rect x="5.5" y="0" width="16" height="13" fill="#bdb4a1"/>
<rect x="0" y="5.8" width="5.5" height="7.6" fill="#7c5a44"/>
<rect x="0" y="13" width="4.5" height="3" fill="#70452a"/>
<rect x="15" y="12" width="6.4" height="22" fill="#d2c8b0"/>
<rect x="16.6" y="13" width="1.9" height="17" fill="#a5b656"/>
<rect x="19.4" y="11" width="2" height="18" fill="#a3a39b"/>
<rect x="15" y="32.5" width="6.4" height="4.7" fill="#7b5a40"/>
<rect x="0" y="34.6" width="4" height="2.6" fill="#9a9186"/>
<path d="M6.2 11.5C6 5 7 1.6 9.6 1.6C12.2 1.6 13.2 5 13 11.5Z" fill="#9a744a"/>
<ellipse cx="9.6" cy="6.4" rx="2" ry="3" fill="#d8ab90"/>
<path d="M4.2 12.6C6 11.2 13.2 11.2 15 12.6L16 21L13.8 21.4V20.6H5.4V21.4L3.2 21Z" fill="#141416"/>
<rect x="5.8" y="20.6" width="7.6" height="4.6" fill="#cf9f82"/>
<path d="M4.8 24.6H14.2L15.8 37.2H3.2Z" fill="#626365"/>
<rect x="2.6" y="17.4" width="2.6" height="2" fill="#dcae93"/><rect x="14" y="17.4" width="2.6" height="2" fill="#dcae93"/>
</g><g id="th2">
<rect x="0" y="0" width="21.400" height="37.200" fill="#e8eaee"/>
<rect x="0" y="0" width="6" height="5" fill="#c6c7c9"/>
<rect x="5.500" y="0" width="16" height="13" fill="#bdb4a1"/>
<rect x="0" y="5.500" width="6.500" height="8.500" fill="#70482f"/>
<rect x="1.200" y="7.500" width="0.900" height="4" fill="#d9dbde"/><rect x="3.400" y="7.900" width="0.900" height="3.600" fill="#d9dbde"/>
<rect x="15.500" y="12" width="5.900" height="22" fill="#d2c8b0"/>
<rect x="17" y="13" width="1.900" height="17" fill="#a5b656"/>
<rect x="19.600" y="11" width="1.800" height="18" fill="#a3a39b"/>
<rect x="15.500" y="32.500" width="5.900" height="4.700" fill="#7b5a40"/>
<rect x="0" y="34.600" width="4" height="2.600" fill="#9a9186"/>
<path d="M7 12C6.600 5 7.800 1.400 10.600 1.400C13.400 1.400 14.600 5 14.200 12Z" fill="#a27a4c"/>
<ellipse cx="10.600" cy="6.200" rx="2.100" ry="3.100" fill="#dcae92"/>
<path d="M5.600 12.800C7.400 11.300 13.800 11.300 15.600 12.800L15.900 21.400H5.300Z" fill="#141416"/>
<rect x="6.800" y="21.200" width="7.600" height="4" fill="#cf9f82"/>
<path d="M5.600 24.600H15L16.400 37.200H4.200Z" fill="#626365"/>
<rect x="9" y="16.600" width="3.200" height="2.600" rx="1" fill="#dcae93"/>
</g></defs>
<g filter="url(#b1)"><use href="#th" x="282.3" y="518.5"/><use href="#th" x="303.7" y="518.5"/><use href="#th" x="325.1" y="518.5"/><use href="#th" x="346.5" y="518.5"/><use href="#th" x="367.9" y="518.5"/><use href="#th" x="389.3" y="518.5"/><use href="#th" x="410.7" y="518.5"/><use href="#th" x="432.1" y="518.5"/><use href="#th" x="453.5" y="518.5"/><use href="#th" x="474.9" y="518.5"/><use href="#th" x="496.3" y="518.5"/><use href="#th" x="517.7" y="518.5"/><use href="#th2" x="539.1" y="518.5"/><use href="#th2" x="560.5" y="518.5"/><use href="#th2" x="581.9" y="518.5"/><use href="#th2" x="603.3" y="518.5"/><use href="#th2" x="624.7" y="518.5"/></g>
</svg>
</div>
<div class="abs" style="left:282.6px;top:533.8px;width:1.6px;height:8px;border-radius:1px;background:#23323a"></div>
<div class="abs" style="left:626px;top:533.8px;width:1.6px;height:8px;border-radius:1px;background:#23323a"></div>
<div class="abs" style="left:509px;top:522px;width:43.5px;height:10.5px;border-radius:3px;background:rgba(30,30,30,.45)"></div>
<div class="abs" style="left:287.3px;top:521.5px;font-size:9.3px;color:#fff;white-space:nowrap;text-shadow:0 0 2px rgba(0,0,0,.9),0 0 1px rgba(0,0,0,.8);letter-spacing:0.21px">video_df4cfac017bad04464672d7daabcaa00.mp4</div>
<div class="abs" style="left:512px;top:521.5px;font-size:9.3px;color:#fff;white-space:nowrap;text-shadow:0 0 2px rgba(0,0,0,.7);letter-spacing:0.1px">00:06:22</div>
<!-- track controls -->
<svg class="abs" style="left:207px;top:531.5px" width="13" height="11" viewBox="0 0 13 11"><path d="M1 3.8H3.2L6.4 1.2V9.8L3.2 7.2H1Z" fill="none" stroke="#1b1c1f" stroke-width="1.1" stroke-linejoin="round"/><path d="M8.6 3.6C9.6 4.6 9.6 6.4 8.6 7.4M10.4 2.2C12.2 4 12.2 7 10.4 8.8" fill="none" stroke="#1b1c1f" stroke-width="1" stroke-linecap="round"/></svg>
<div class="abs" style="left:237px;top:518px;width:38px;height:38.3px;border-radius:5px;background:#eef1f4;border:1px dashed #dfe3e7"></div>
<svg class="abs" style="left:249.5px;top:531.8px" width="13" height="13" viewBox="0 0 13 13"><path d="M2 9.6L2.4 7.4L8 1.8C8.6 1.2 9.6 1.2 10.2 1.8C10.8 2.4 10.8 3.4 10.2 4L4.6 9.6Z" fill="none" stroke="#1b1c1f" stroke-width="1.1" stroke-linejoin="round"/><path d="M7.6 10.4H11.4" stroke="#1b1c1f" stroke-width="1.1" stroke-linecap="round"/></svg>
<!-- playhead -->
<div class="abs" style="left:279px;top:448px;width:1.6px;height:119px;background:#1b1c1f"></div>
<svg class="abs" style="left:274px;top:438px" width="12" height="15" viewBox="0 0 12 15"><path d="M2 3A1.6 1.6 0 0 1 3.6 1.4H8.4A1.6 1.6 0 0 1 10 3V9L6 13L2 9Z" fill="#eceef1" stroke="#1b1c1f" stroke-width="1.4" stroke-linejoin="round"/></svg>


<div class="abs" style="left:196px;top:73px;width:706px;height:1px;background:#eceef1"></div>
<div class="abs" style="left:731.5px;top:87px;font-size:12.5px;font-weight:bold;color:#1b1c1f;letter-spacing:-0.1px">Avatar</div>
<svg class="abs" style="left:881px;top:88px" width="11" height="11" viewBox="0 0 11 11"><path d="M1.2 1.2L9.8 9.8M9.8 1.2L1.2 9.8" stroke="#6d7178" stroke-width="1" stroke-linecap="round"/></svg>
<div class="abs" style="left:732px;top:113.4px;width:161px;height:27.2px;border-radius:6px;background:#eef1f4"></div>
<div class="abs" style="left:733.5px;top:115px;width:77px;height:24px;border-radius:5px;background:#fff;box-shadow:0 0 2px rgba(0,0,0,.08)"></div>
<div class="abs" style="left:733px;top:120.6px;width:78px;text-align:center;font-size:10.5px;font-weight:bold;color:#1b1c1f">Script</div>
<div class="abs" style="left:812px;top:120.6px;width:81px;text-align:center;font-size:10.5px;color:#878b93">Settings</div>
<div class="abs" style="left:732px;top:153px;width:161px;height:104px;border-radius:6px;background:#eef1f4"></div>
<div class="abs" style="left:741.7px;top:157px;width:150px;font-size:10.7px;line-height:16.8px;color:#1f2023;white-space:nowrap;letter-spacing:0.16px">Hello, I'm your avatar. You<br>can choose your favorite<br>avatar on your right and<br>click on the script in the<br>video to edit it.</div>
<div class="abs" style="left:786px;width:100px;text-align:right;top:239px;font-size:8.7px;color:#9a9ea6;white-space:nowrap">122/1000</div>
<svg class="abs" style="left:884px;top:248px" width="8" height="8" viewBox="0 0 8 8"><path d="M1 7L7 1M4 7L7 4" stroke="#8d9199" stroke-width="0.8"/></svg>
<div class="abs" style="left:896px;top:325px;width:6px;height:1px;background:#eceef1"></div>


<div class="abs" id="pop" style="left:678px;top:255px;width:218px;height:242px;border:4px solid #5c3de0;border-radius:8px;background:#f8f9fb;overflow:hidden">
 <div class="abs" style="left:-682px;top:-259px;width:952px;height:625px">
  <div class="abs" style="left:685px;top:301px;width:204px;height:210px;border-radius:8px;background:#fff;box-shadow:0 0 3px rgba(0,0,0,.04)"></div>
  
  <div class="abs" style="left:684px;top:261.5px;width:159px;height:34.5px;border-radius:7px;background:#fff;box-shadow:0 0 3.5px rgba(60,200,225,.7)"></div><svg class="abs" style="left:684px;top:261.5px" width="159" height="34.5" viewBox="0 0 159 34.5"><rect x="0.900" y="0.900" width="157.200" height="32.700" rx="6.200" fill="none" stroke="#44d2e3" stroke-width="1.800"/></svg>
  <svg class="abs" style="left:696.3px;top:271.9px" width="17" height="14" viewBox="0 0 17 14"><path d="M2.8 12.6V9.9C0.6 8.4 0.4 4 2.7 2C4.6 0.300 8.2 0.6 8.9 3.800L8.900 5L10 7.100L8.900 7.400V8.900C8.900 9.900 8.300 10.200 7.300 10.200H6.600V12.600Z" fill="none" stroke="#8f96a1" stroke-width="1.050" stroke-linejoin="round"/><path d="M11.700 4.900C12.600 5.800 12.600 7.400 11.700 8.300M13.500 3.500C15.300 5.300 15.300 7.900 13.500 9.700" fill="none" stroke="#8f96a1" stroke-width="1.050" stroke-linecap="round"/></svg>
  <div class="abs" style="left:723.5px;top:270.5px;font-size:14.2px;color:#232427;white-space:nowrap;letter-spacing:0.06px">Albina in livin</div>
  <svg class="abs" style="left:816px;top:274px" width="13" height="8" viewBox="0 0 13 8"><path d="M1.2 6.8L6.5 1.6L11.8 6.8" fill="none" stroke="#4a4d53" stroke-width="1.4" stroke-linecap="round" stroke-linejoin="round"/></svg>
  <div class="abs" style="left:851px;top:261.5px;width:38px;height:34.5px;border-radius:7px;background:#eceff2"></div>
  <svg class="abs" style="left:865px;top:272px" width="12" height="13" viewBox="0 0 12 13"><path d="M1 0.8L11 6.5L1 12.2Z" fill="#0d0d0f"/></svg>
  <div class="abs it" style="top:309.5px;letter-spacing:0.1px">Jeff in cloakro</div>
  <div class="abs it" style="top:348.5px;letter-spacing:-0.24px">Kaleb cos</div>
  <div class="abs it" style="top:387.5px;letter-spacing:-0.14px">Samuel outside 3</div>
  <div class="abs it" style="top:427px;width:129.6px;overflow:hidden;letter-spacing:-0.1px">Sebastian in the bathroom</div>
  <div class="abs hp" style="top:306.5px"></div><div class="abs hp" style="top:345.5px"></div><div class="abs hp" style="top:384.5px"></div><div class="abs hp" style="top:424.0px"></div>
  <svg class="abs" style="left:855.3px;top:312px" width="12" height="12" viewBox="0 0 12 12"><use href="#hph"/></svg>
  <svg class="abs" style="left:855.3px;top:351px" width="12" height="12" viewBox="0 0 12 12"><use href="#hph"/></svg>
  <svg class="abs" style="left:855.3px;top:390px" width="12" height="12" viewBox="0 0 12 12"><use href="#hph"/></svg>
  <svg class="abs" style="left:855.3px;top:429.5px" width="12" height="12" viewBox="0 0 12 12"><use href="#hph"/></svg>
  <div class="abs" style="left:700px;top:469.3px;font-size:11.8px;color:#a4a8af;white-space:nowrap">Female voices</div>
  <div class="abs" style="left:692px;top:490px;width:188px;height:20px;border-radius:8px;background:#eef0f3"></div>
 </div>
</div>
<svg width="0" height="0" style="position:absolute"><defs><g id="hph"><path d="M1.6 8.2V6.2A4.4 4.4 0 0 1 10.4 6.2V8.2" fill="none" stroke="#1b1c1f" stroke-width="1.3"/><rect x="0.9" y="7" width="2.6" height="4" rx="1" fill="#1b1c1f"/><rect x="8.5" y="7" width="2.6" height="4" rx="1" fill="#1b1c1f"/></g></defs></svg>
<!-- big purple cursor -->
<svg class="abs" style="left:780px;top:286px;overflow:visible" width="60" height="64" viewBox="780 286 60 64"><defs><filter id="cs" x="-30%" y="-30%" width="160%" height="160%"><feDropShadow dx="0" dy="2" stdDeviation="2" flood-color="#000" flood-opacity=".3"/></filter></defs><path d="M787.4 293.8L827.4 321.2L808.6 326L798 341.2Z" fill="#5c3ee0" stroke="#fff" stroke-width="1.5" stroke-linejoin="round" filter="url(#cs)"/></svg>


</div></div>
</div>
</body>
</html>
